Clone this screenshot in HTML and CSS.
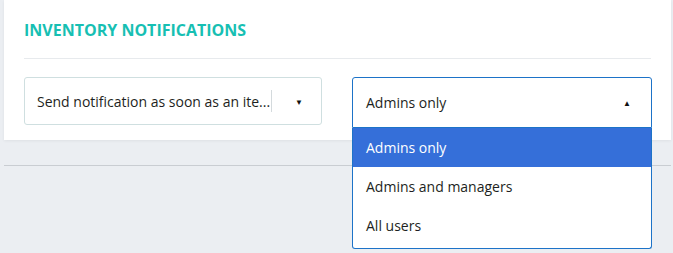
FILE: index.html
```html
<!DOCTYPE html>
<html>
<head>
<meta charset="utf-8">
<link rel="stylesheet" href="styles.css">
</head>
<body>
<div class="page">
  <section class="card">
    <h2 class="title">INVENTORY NOTIFICATIONS</h2>
    <div class="divider"></div>
    <div class="row">
      <div class="select">
        <span class="value">Send notification as soon as an ite...</span>
        <span class="sep"></span>
        <span class="arrow">▼</span>
      </div>
      <div class="select-wrap">
        <div class="select open">
          <span class="value">Admins only</span>
          <span class="arrow up">▲</span>
        </div>
        <ul class="menu">
          <li class="opt active">Admins only</li>
          <li class="opt">Admins and managers</li>
          <li class="opt">All users</li>
        </ul>
      </div>
    </div>
  </section>
  <div class="rule"></div>
</div>
</body>
</html>
```
FILE: styles.css
```css
* { box-sizing: border-box; }
html, body { margin: 0; padding: 0; }
body {
  background: #ebeef2;
  font-family: "Open Sans", "Noto Sans", sans-serif;
  color: #1d1f22;
  width: 673px;
  height: 253px;
  overflow: hidden;
}
.page {
  padding: 0 2px 0 4px;
}
.card {
  background: #fff;
  height: 140px;
  padding: 0 20px;
  box-shadow: 0 1px 3px rgba(0,0,0,0.06);
}
.title {
  margin: 0;
  padding-top: 19px;
  height: 41px;
  font-size: 16px;
  font-weight: 700;
  line-height: 22px;
  color: #17bfb3;
  letter-spacing: 0;
}
.divider {
  height: 1px;
  background: #e7eaed;
  margin-top: 17px;
}
.row {
  display: flex;
  gap: 30px;
  margin-top: 18px;
}
.select {
  flex: none;
  width: 298px;
  height: 48px;
  border: 1px solid #cfdfe0;
  border-radius: 3px;
  display: flex;
  align-items: center;
  padding: 0 0 0 12px;
  font-size: 14px;
  background: #fff;
}
.select .value {
  flex: none;
  width: 234px;
  white-space: nowrap;
}
.sep {
  width: 1px;
  height: 22px;
  background: #d4dadd;
  margin: 0 23px 0 0;
}
.arrow {
  font-size: 8px;
  color: #111;
}
.select-wrap {
  flex: none;
  position: relative;
  width: 300px;
}
.select.open {
  width: 300px;
  height: 51px;
  border-color: #1d73c8;
  border-bottom-left-radius: 0;
  border-bottom-right-radius: 0;
  padding-left: 13px;
}
.select.open .value {
  flex: 1;
  width: auto;
}
.arrow.up {
  width: 28px;
}
.menu {
  position: absolute;
  left: 0;
  top: 51px;
  width: 300px;
  margin: 0;
  padding: 0 0 3px;
  list-style: none;
  background: #fff;
  border: 1px solid #1d73c8;
  border-top: 0;
  border-radius: 0 0 3px 3px;
  z-index: 2;
}
.opt {
  height: 39px;
  line-height: 39px;
  padding-left: 13px;
  font-size: 14px;
}
.opt.active {
  background: #356fd9;
  color: #fff;
}
.rule {
  height: 1px;
  background: #c9cdd2;
  margin-top: 25px;
}
```
